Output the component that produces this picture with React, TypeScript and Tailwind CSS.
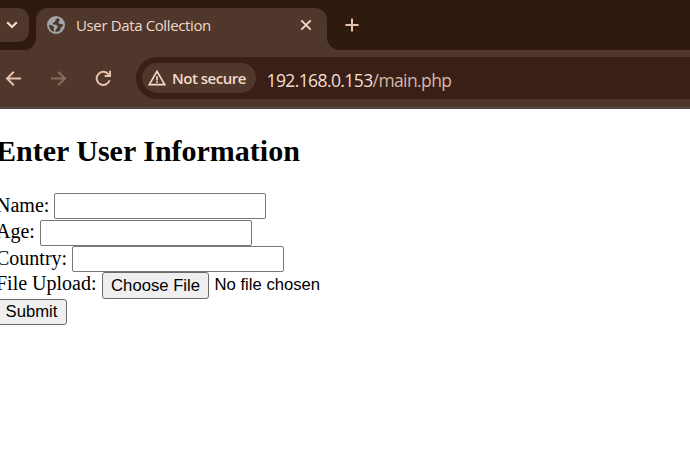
import { MdWarningAmber } from "react-icons/md";

const uiFont = "font-['Open_Sans','Noto_Sans',sans-serif]";
const serif = "font-['Liberation_Serif','Times_New_Roman',serif]";
const sans = "font-['Liberation_Sans',Arial,sans-serif]";

function Globe() {
  return (
    <svg className="size-[18px] shrink-0" viewBox="0 0 18 18">
      <circle cx="9" cy="9" r="9" fill="#a2a5a9" />
      <path
        d="M10.7 2.2 8.6 3.4 8.2 5.5 5.8 7 6.2 8.6 9.4 8.7 10.7 10.5 10.3 12.2 8.7 13.2 8.6 15.9A7 7 0 0 0 13.1 14.6L13.7 11.8 15.8 10.2 15.9 8.3 12.8 8 11.3 6.4 12.6 4.5 12.3 2.8Z"
        fill="#4f372b"
      />
      <path d="M2 8.7 5 9.3 7.1 11.1 6.6 13 7.4 15.8A7 7 0 0 1 2 8.7Z" fill="#4f372b" />
    </svg>
  );
}

function TabStrip() {
  return (
    <div className="flex h-[50px] bg-[#2f1a0e]">
      <div className="flex w-9 shrink-0 bg-[#4f372b]">
        <div className="w-full rounded-br-xl bg-[#2f1a0e] pt-2">
          <div className="-ml-2 flex h-[34px] w-[37px] items-center justify-end rounded-[11px] bg-[#4f372b] pr-[11px]">
            <svg width="12" height="8" viewBox="0 0 12 8" fill="none" stroke="#f3d9cb" strokeWidth="2.2">
              <path d="M1.2 1.2 6 6l4.8-4.8" />
            </svg>
          </div>
        </div>
      </div>
      <div className="w-[291px] shrink-0 pt-[7.5px]">
        <div className="flex h-full items-center rounded-t-xl bg-[#4f372b] pb-[7px] pl-[11px] pr-[15px]">
          <Globe />
          <span className={`${uiFont} ml-[11px] flex-1 whitespace-nowrap text-[15px] leading-5 tracking-[-0.37px] text-[#f0d8ca]`}>User Data Collection</span>
          <svg className="size-3 shrink-0" viewBox="0 0 12 12" fill="none" stroke="#f3dacd" strokeWidth="1.8">
            <path d="m1.3 1.3 9.4 9.4M10.7 1.3 1.3 10.7" />
          </svg>
        </div>
      </div>
      <div className="flex flex-1 bg-[#4f372b]">
        <div className="w-full rounded-bl-[13px] bg-[#2f1a0e] pl-[18px] pt-[18px]">
          <svg className="size-[14px]" viewBox="0 0 14 14" fill="none" stroke="#e7c1ad" strokeWidth="2">
            <path d="M7 .5v13M.5 7h13" />
          </svg>
        </div>
      </div>
    </div>
  );
}

function Toolbar() {
  return (
    <div className="flex h-[59px] items-center border-b-2 border-[#594641] bg-[#4f372b] pb-px pl-[5px]">
      <svg className="size-4 shrink-0" viewBox="0 0 16 16" fill="none" stroke="#e8c1ad" strokeWidth="2">
        <path d="M16 8.5H2.5M8.8 1.7 2 8.5l6.8 6.8" />
      </svg>
      <svg className="ml-[29px] size-4 shrink-0" viewBox="0 0 16 16" fill="none" stroke="#876b5e" strokeWidth="2">
        <path d="M1 8.5h13.5M8.2 1.7 15 8.5l-6.8 6.8" />
      </svg>
      <svg className="ml-[29px] size-4 shrink-0" viewBox="0 0 16 16" fill="none" stroke="#e8c1ad" strokeWidth="2">
        <path d="M14.6 10.3A6.6 6.6 0 1 1 13.6 4.5L15 6M15 .7V6H9.7" />
      </svg>
      <div className="ml-[25px] flex h-[42px] flex-1 items-center rounded-l-full bg-[#391f15] pl-[6px]">
        <div className="flex h-[30px] w-[114px] shrink-0 items-center rounded-full bg-[#4f372b] pl-[5px]">
          <MdWarningAmber className="size-5 shrink-0 text-[#f3dacd]" />
          <span className={`${uiFont} ml-[5px] whitespace-nowrap text-[15px] font-semibold leading-5 tracking-[-0.5px] text-[#f3dacd]`}>Not secure</span>
        </div>
        <span className={`${uiFont} ml-[10.5px] mt-[3px] whitespace-nowrap text-[17.5px] leading-6 tracking-[-0.6px] text-[#f3dfd4]`}>
          192.168.0.153<span className="text-[#d3b9a8]">/main.php</span>
        </span>
      </div>
    </div>
  );
}

function Field({ label, id }: { label: string; id: string }) {
  return (
    <div className="flex h-[26.5px] items-center">
      <label htmlFor={id} className="mr-[5px] whitespace-nowrap pb-[3px]">{label}</label>
      <input id={id} className="h-[26px] w-[212px] rounded-[2px] border border-[#767676] bg-white px-1 outline-none" />
    </div>
  );
}

const button = `${sans} rounded-[3px] border border-[#6b6b6b] bg-[#efefef] text-[16.67px] leading-5 whitespace-nowrap`;

export default function App() {
  return (
    <div className="h-[459px] w-[690px] overflow-hidden bg-white text-black">
      <TabStrip />
      <Toolbar />
      <main className={`${serif} -ml-[4px] pt-[25px] text-[20px] leading-6`}>
        <h2 className="mb-[25px] whitespace-nowrap text-[30px] font-bold leading-[34px]">Enter User Information</h2>
        <form>
          <Field label="Name:" id="name" />
          <Field label="Age:" id="age" />
          <Field label="Country:" id="country" />
          <div className="flex h-[26.5px] items-center">
            <span className="mr-[5px] whitespace-nowrap pb-[5px]">File Upload:</span>
            <button type="button" className={`${button} h-[27px] w-[107px] pl-px`}>Choose File</button>
            <span className={`${sans} ml-[6px] whitespace-nowrap pb-[2px] text-[16.67px] leading-5`}>No file chosen</span>
          </div>
          <button type="button" className={`${button} block h-[26px] w-[71px] pb-px`}>Submit</button>
        </form>
      </main>
    </div>
  );
}
